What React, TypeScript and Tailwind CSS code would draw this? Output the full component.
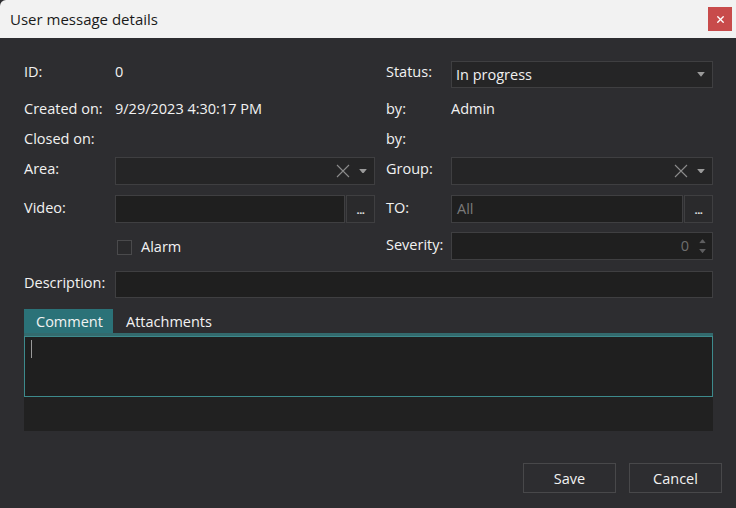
import { X } from 'lucide-react';

const font = { fontFamily: '"Segoe UI", "Open Sans", "Noto Sans", sans-serif' };

function Caret({ className = '', color = '#9a9a9a', w = 8 }: { className?: string; color?: string; w?: number }) {
  return (
    <svg width={w} height={w * 0.6} viewBox="0 0 8 5" className={className}>
      <path d="M0 0 L8 0 L4 5 Z" fill={color} />
    </svg>
  );
}

function ClearX() {
  return (
    <svg width="14" height="14" viewBox="0 0 14 14" className="mr-[9px]">
      <path d="M1 1 L13 13 M13 1 L1 13" stroke="#8c8c8c" strokeWidth="1.1" />
    </svg>
  );
}

function Combo({ value, clear }: { value?: string; clear?: boolean }) {
  return (
    <div className="flex-1 h-full flex items-center bg-[#252526] border border-[#3f3f41] pl-[4px] pr-[7px]">
      <span className="flex-1 text-[14.5px] text-[#f0f0f0]">{value}</span>
      {clear && <ClearX />}
      <Caret />
    </div>
  );
}

function PathBox({ placeholder }: { placeholder?: string }) {
  return (
    <div className="flex-1 h-full flex">
      <div className="flex-1 h-full flex items-center bg-[#1f1f1f] border border-[#3f3f41] px-[5px] text-[14.5px] text-[#7a7a7a]">
        {placeholder}
      </div>
      <div className="w-[29px] h-full ml-[1px] border border-[#3f3f41] bg-[#2a2a2c] flex items-end justify-center pb-[7px] text-[11px] leading-none text-[#e0e0e0] font-bold tracking-[-0.5px]">
        ...
      </div>
    </div>
  );
}

export default function App() {
  const label = 'text-[14.5px] text-[#f2f2f2] pb-[3px]';
  return (
    <div className="w-[736px] h-[508px] bg-[#2d2d30] flex flex-col overflow-hidden" style={font}>
      <div className="h-[38px] shrink-0 bg-[#f2f2f2] flex items-center pl-[10px] pr-[4px] rounded-tl-[6px]">
        <span className="flex-1 text-[15px] text-[#1a1a1a]">User message details</span>
        <div className="w-[24px] h-[24px] bg-[#c84b4b] flex items-center justify-center">
          <X size={11} strokeWidth={3} color="#ffffff" />
        </div>
      </div>

      <div className="flex flex-col pl-[24px] pr-[23px] pt-[23px]">
        <div className="flex h-[27px] items-center">
          <div className="w-[351px] flex items-center h-full">
            <span className={`${label} w-[91px] pb-[5px]`}>ID:</span>
            <span className={`${label} pb-[5px]`}>0</span>
          </div>
          <div className="w-[11px]" />
          <div className="flex-1 flex items-center h-full">
            <span className={`${label} w-[65px] pb-[5px]`}>Status:</span>
            <Combo value="In progress" />
          </div>
        </div>

        <div className="flex h-[26px] items-center mt-[9px]">
          <div className="w-[351px] flex items-center">
            <span className={`${label} w-[91px]`}>Created on:</span>
            <span className={label}>9/29/2023 4:30:17 PM</span>
          </div>
          <div className="w-[11px]" />
          <div className="flex-1 flex items-center">
            <span className={`${label} w-[65px]`}>by:</span>
            <span className={label}>Admin</span>
          </div>
        </div>

        <div className="flex h-[26px] items-center mt-[4px]">
          <div className="w-[351px] flex items-center">
            <span className={`${label} w-[91px]`}>Closed on:</span>
          </div>
          <div className="w-[11px]" />
          <div className="flex-1 flex items-center">
            <span className={`${label} w-[65px]`}>by:</span>
          </div>
        </div>

        <div className="flex h-[28px] items-center mt-[4px]">
          <div className="w-[351px] flex items-center h-full">
            <span className={`${label} w-[91px] pb-[5px]`}>Area:</span>
            <Combo clear />
          </div>
          <div className="w-[11px]" />
          <div className="flex-1 flex items-center h-full">
            <span className={`${label} w-[65px] pb-[5px]`}>Group:</span>
            <Combo clear />
          </div>
        </div>

        <div className="flex h-[28px] items-center mt-[10px]">
          <div className="w-[351px] flex items-center h-full">
            <span className={`${label} w-[91px]`}>Video:</span>
            <PathBox />
          </div>
          <div className="w-[11px]" />
          <div className="flex-1 flex items-center h-full">
            <span className={`${label} w-[65px]`}>TO:</span>
            <PathBox placeholder="All" />
          </div>
        </div>

        <div className="flex h-[28px] items-center mt-[9px]">
          <div className="w-[351px] flex items-center h-full pl-[93px] pt-[2px]">
            <div className="w-[15px] h-[15px] border border-[#4a4a4c] bg-[#2a2a2c] mr-[9px]" />
            <span className="text-[14.5px] text-[#f2f2f2]">Alarm</span>
          </div>
          <div className="w-[11px]" />
          <div className="flex-1 flex items-center h-full">
            <span className={`${label} w-[65px]`}>Severity:</span>
            <div className="flex-1 h-full flex items-center bg-[#1f1f1f] border border-[#3f3f41] pr-[6px]">
              <span className="flex-1 text-right text-[14.5px] text-[#6e6e6e] pr-[10px]">0</span>
              <div className="flex flex-col gap-[6px]">
                <Caret className="rotate-180" color="#5e5e60" w={7} />
                <Caret color="#5e5e60" w={7} />
              </div>
            </div>
          </div>
        </div>

        <div className="flex h-[27px] items-center mt-[11px]">
          <span className={`${label} w-[91px]`}>Description:</span>
          <div className="flex-1 h-full bg-[#1f1f1f] border border-[#3f3f41]" />
        </div>

        <div className="flex h-[24px] mt-[11px] items-stretch">
          <div className="w-[89px] bg-[#2b7278] flex items-center pl-[12px] pt-[1px] text-[14.5px] text-[#f2f2f2]">Comment</div>
          <div className="flex items-center pl-[13px] pt-[1px] text-[14.5px] text-[#f2f2f2]">Attachments</div>
        </div>
        <div className="h-[98px] bg-[#212121] flex flex-col">
          <div className="h-[3px] bg-[#336a6d]" />
          <div className="h-[61px] border border-[#3d8a8c] bg-[#1f1f1f] pl-[6px] pt-[3px]">
            <div className="w-[1px] h-[18px] bg-[#9a9a9a]" />
          </div>
        </div>
      </div>

      <div className="flex justify-end gap-[13px] pr-[14px] mt-[32px]">
        <button className="w-[93px] h-[30px] border border-[#48484a] pt-[1px] text-[14.5px] text-[#f2f2f2]">Save</button>
        <button className="w-[93px] h-[30px] border border-[#48484a] pt-[1px] text-[14.5px] text-[#f2f2f2]">Cancel</button>
      </div>
    </div>
  );
}
